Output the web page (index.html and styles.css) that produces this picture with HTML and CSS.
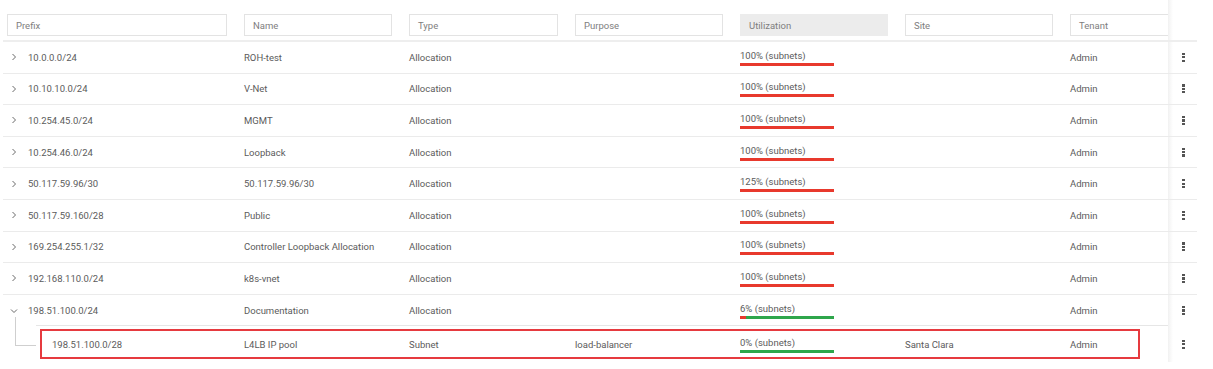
FILE: index.html
```html
<!DOCTYPE html>
<html>
<head>
<meta charset="utf-8">
<link rel="stylesheet" href="styles.css">
</head>
<body>
<div class="table">
  <div class="row head">
    <div class="cell"><div class="filter">Prefix</div></div>
    <div class="cell"><div class="filter">Name</div></div>
    <div class="cell"><div class="filter">Type</div></div>
    <div class="cell"><div class="filter">Purpose</div></div>
    <div class="cell"><div class="filter active">Utilization</div></div>
    <div class="cell"><div class="filter">Site</div></div>
    <div class="cell clip"><div class="filter open">Tenant</div></div>
    <div class="cell act"></div>
  </div>

  <div class="row">
    <div class="cell pfx"><svg class="chev" viewBox="0 0 8 8"><path d="M2.5 1 L5.5 4 L2.5 7"/></svg>10.0.0.0/24</div>
    <div class="cell">ROH-test</div>
    <div class="cell">Allocation</div>
    <div class="cell"></div>
    <div class="cell"><div class="util"><span>100% (subnets)</span><div class="bar"><i class="used" style="width:100%"></i></div></div></div>
    <div class="cell"></div>
    <div class="cell">Admin</div>
    <div class="cell act"><span class="kebab"><b></b><b></b><b></b></span></div>
  </div>

  <div class="row">
    <div class="cell pfx"><svg class="chev" viewBox="0 0 8 8"><path d="M2.5 1 L5.5 4 L2.5 7"/></svg>10.10.10.0/24</div>
    <div class="cell">V-Net</div>
    <div class="cell">Allocation</div>
    <div class="cell"></div>
    <div class="cell"><div class="util"><span>100% (subnets)</span><div class="bar"><i class="used" style="width:100%"></i></div></div></div>
    <div class="cell"></div>
    <div class="cell">Admin</div>
    <div class="cell act"><span class="kebab"><b></b><b></b><b></b></span></div>
  </div>

  <div class="row">
    <div class="cell pfx"><svg class="chev" viewBox="0 0 8 8"><path d="M2.5 1 L5.5 4 L2.5 7"/></svg>10.254.45.0/24</div>
    <div class="cell">MGMT</div>
    <div class="cell">Allocation</div>
    <div class="cell"></div>
    <div class="cell"><div class="util"><span>100% (subnets)</span><div class="bar"><i class="used" style="width:100%"></i></div></div></div>
    <div class="cell"></div>
    <div class="cell">Admin</div>
    <div class="cell act"><span class="kebab"><b></b><b></b><b></b></span></div>
  </div>

  <div class="row">
    <div class="cell pfx"><svg class="chev" viewBox="0 0 8 8"><path d="M2.5 1 L5.5 4 L2.5 7"/></svg>10.254.46.0/24</div>
    <div class="cell">Loopback</div>
    <div class="cell">Allocation</div>
    <div class="cell"></div>
    <div class="cell"><div class="util"><span>100% (subnets)</span><div class="bar"><i class="used" style="width:100%"></i></div></div></div>
    <div class="cell"></div>
    <div class="cell">Admin</div>
    <div class="cell act"><span class="kebab"><b></b><b></b><b></b></span></div>
  </div>

  <div class="row">
    <div class="cell pfx"><svg class="chev" viewBox="0 0 8 8"><path d="M2.5 1 L5.5 4 L2.5 7"/></svg>50.117.59.96/30</div>
    <div class="cell">50.117.59.96/30</div>
    <div class="cell">Allocation</div>
    <div class="cell"></div>
    <div class="cell"><div class="util"><span>125% (subnets)</span><div class="bar"><i class="used" style="width:100%"></i></div></div></div>
    <div class="cell"></div>
    <div class="cell">Admin</div>
    <div class="cell act"><span class="kebab"><b></b><b></b><b></b></span></div>
  </div>

  <div class="row">
    <div class="cell pfx"><svg class="chev" viewBox="0 0 8 8"><path d="M2.5 1 L5.5 4 L2.5 7"/></svg>50.117.59.160/28</div>
    <div class="cell">Public</div>
    <div class="cell">Allocation</div>
    <div class="cell"></div>
    <div class="cell"><div class="util"><span>100% (subnets)</span><div class="bar"><i class="used" style="width:100%"></i></div></div></div>
    <div class="cell"></div>
    <div class="cell">Admin</div>
    <div class="cell act"><span class="kebab"><b></b><b></b><b></b></span></div>
  </div>

  <div class="row">
    <div class="cell pfx"><svg class="chev" viewBox="0 0 8 8"><path d="M2.5 1 L5.5 4 L2.5 7"/></svg>169.254.255.1/32</div>
    <div class="cell">Controller Loopback Allocation</div>
    <div class="cell">Allocation</div>
    <div class="cell"></div>
    <div class="cell"><div class="util"><span>100% (subnets)</span><div class="bar"><i class="used" style="width:100%"></i></div></div></div>
    <div class="cell"></div>
    <div class="cell">Admin</div>
    <div class="cell act"><span class="kebab"><b></b><b></b><b></b></span></div>
  </div>

  <div class="row">
    <div class="cell pfx"><svg class="chev" viewBox="0 0 8 8"><path d="M2.5 1 L5.5 4 L2.5 7"/></svg>192.168.110.0/24</div>
    <div class="cell">k8s-vnet</div>
    <div class="cell">Allocation</div>
    <div class="cell"></div>
    <div class="cell"><div class="util"><span>100% (subnets)</span><div class="bar"><i class="used" style="width:100%"></i></div></div></div>
    <div class="cell"></div>
    <div class="cell">Admin</div>
    <div class="cell act"><span class="kebab"><b></b><b></b><b></b></span></div>
  </div>

  <div class="row expanded">
    <div class="cell pfx"><svg class="chev" viewBox="0 0 8 8"><path d="M1 2.5 L4 5.5 L7 2.5"/></svg>198.51.100.0/24</div>
    <div class="cell">Documentation</div>
    <div class="cell">Allocation</div>
    <div class="cell"></div>
    <div class="cell"><div class="util"><span>6% (subnets)</span><div class="bar"><i class="used" style="width:6%"></i></div></div></div>
    <div class="cell"></div>
    <div class="cell">Admin</div>
    <div class="cell act"><span class="kebab"><b></b><b></b><b></b></span></div>
  </div>

  <div class="row child">
    <div class="cell pfx sub"><span class="tree"></span>198.51.100.0/28</div>
    <div class="cell">L4LB IP pool</div>
    <div class="cell">Subnet</div>
    <div class="cell">load-balancer</div>
    <div class="cell"><div class="util"><span>0% (subnets)</span><div class="bar"></div></div></div>
    <div class="cell">Santa Clara</div>
    <div class="cell">Admin</div>
    <div class="cell act"><span class="kebab"><b></b><b></b><b></b></span></div>
  </div>
</div>
</body>
</html>
```

FILE: styles.css
```css
*, *::before, *::after { box-sizing: border-box; }
body {
  margin: 0;
  background: #fff;
  font-family: Roboto, "Liberation Sans", Arial, sans-serif;
  font-size: 9.5px;
  color: #5b5b5b;
}
.table {
  margin-left: 3px;
  width: 1194px;
}
.row {
  display: grid;
  grid-template-columns: 241px 165px 166px 165px 165px 165px 98px 29px;
  height: 31.6px;
  border-bottom: 1px solid #ebebeb;
  align-items: stretch;
}
.cell {
  display: flex;
  align-items: center;
  white-space: nowrap;
  min-width: 0;
}
.row.head {
  height: 42px;
  border-bottom: 2px solid #eeeeee;
}
.head .cell {
  padding-top: 14px;
  align-items: flex-start;
  padding-right: 17px;
}
.head .cell:first-child { padding-left: 4px; padding-right: 17px; }
.head .cell.clip { padding-right: 0; overflow: hidden; }
.filter {
  width: 100%;
  height: 22px;
  border: 1px solid #e3e3e3;
  background: #fff;
  color: #7e7e7e;
  padding-left: 8px;
  display: flex;
  align-items: center;
}
.filter.active {
  background: #ececec;
  border-color: #ececec;
}
.filter.open { border-right: none; }
.cell.act {
  background: linear-gradient(to right, #f1f1f1 0, #f7f7f7 2px, #fff 5px);
  justify-content: center;
  padding-left: 2px;
}
.pfx { padding-left: 7px; }
.chev {
  width: 8px;
  height: 8px;
  margin-right: 10px;
  fill: none;
  stroke: #6a6a6a;
  stroke-width: 1;
}
.util {
  display: flex;
  flex-direction: column;
  gap: 1px;
  margin-top: 1px;
}
.util span { line-height: 12px; }
.bar {
  width: 94px;
  height: 3px;
  background: #2ea64b;
  display: flex;
}
.bar .used {
  display: block;
  height: 100%;
  background: #e8392d;
}
.kebab {
  display: flex;
  flex-direction: column;
  gap: 1.2px;
}
.kebab b {
  display: block;
  width: 2.2px;
  height: 2.2px;
  background: #555;
}
.row.expanded {
  border-bottom: none;
  background: linear-gradient(#e6e6e6, #e6e6e6) no-repeat 33px 100% / calc(100% - 33px) 1px;
}
.row.child {
  height: 36px;
  border-bottom: none;
  position: relative;
}
.row.child::after {
  content: "";
  position: absolute;
  left: 37px;
  top: 3px;
  width: 1100px;
  height: 30px;
  border: 2px solid #e63a3f;
  pointer-events: none;
}
.sub { padding-left: 49px; position: relative; }
.tree {
  position: absolute;
  left: 12px;
  top: -9px;
  width: 21px;
  height: 29px;
  border-left: 1px solid #cfcfcf;
  border-bottom: 1px solid #cfcfcf;
}
```
